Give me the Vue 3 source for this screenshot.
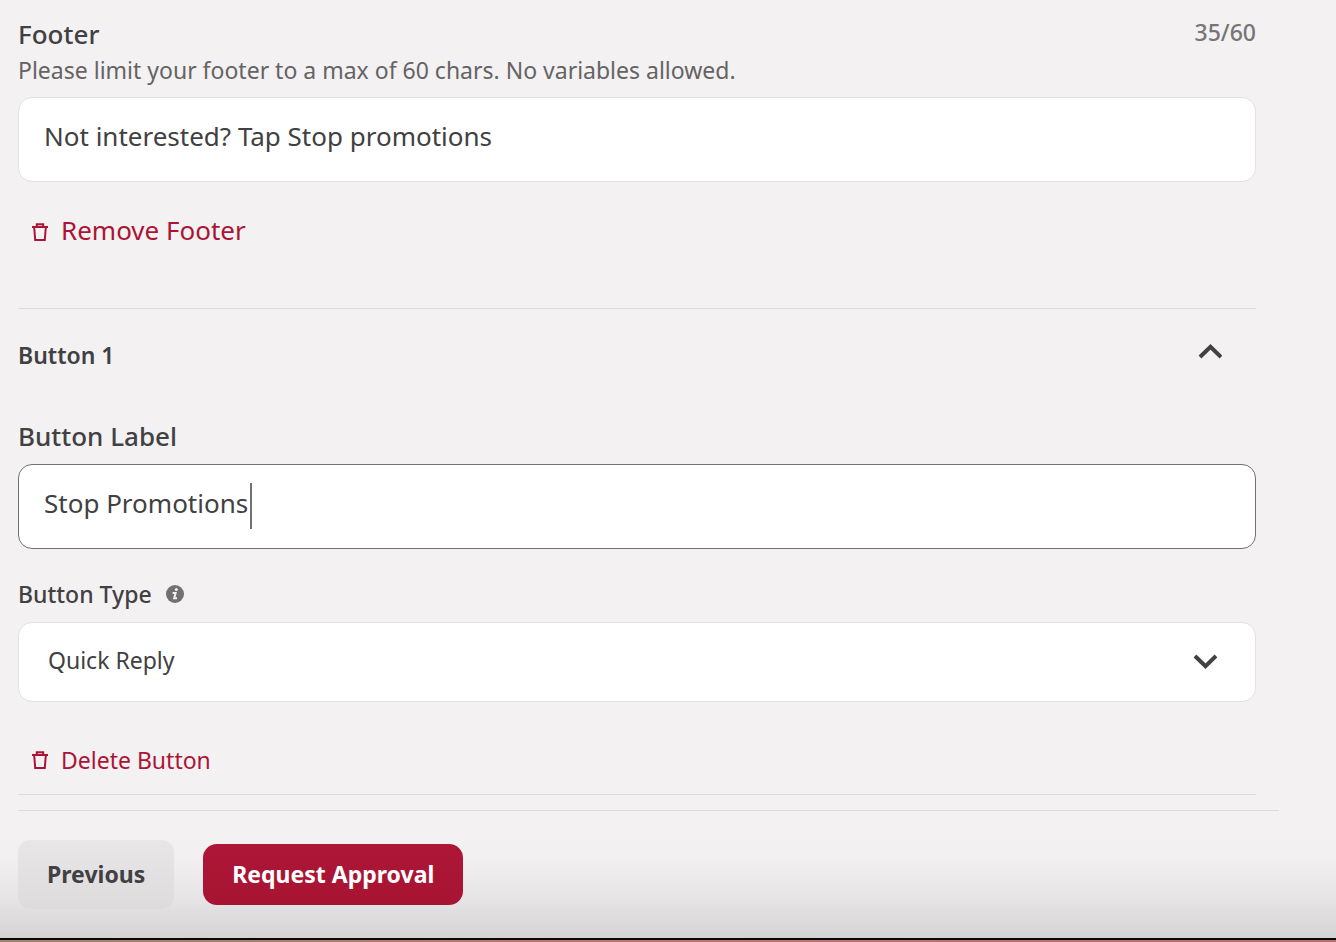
<script setup>
import { ref, computed } from 'vue'

const footer = ref('Not interested? Tap Stop promotions')
const label = ref('Stop Promotions')
const type = ref('Quick Reply')
const open = ref(true)
const limit = 60
const count = computed(() => `${footer.value.length}/${limit}`)
</script>

<template>
  <main class="page">
    <form class="form" @submit.prevent>
      <section class="footer-section">
        <div class="heading">
          <label class="title" for="footer">Footer</label>
          <span class="count">{{ count }}</span>
        </div>
        <p id="footer-help" class="help">Please limit your footer to a max of 60 chars. No variables allowed.</p>
        <input id="footer" v-model="footer" class="field" type="text" maxlength="60" aria-describedby="footer-help" />
        <button class="remove large" type="button">
          <svg class="trash" viewBox="0 0 16 18" aria-hidden="true">
            <path d="M0 4H16M4.8 3.5V1.2H11.2V3.5M2.2 4.5L3.2 17H12.8L13.8 4.5" />
          </svg>
          <span>Remove Footer</span>
        </button>
      </section>

      <section class="button-section">
        <div class="accordion">
          <h2>Button 1</h2>
          <button class="toggle" type="button" aria-label="Toggle Button 1" :aria-expanded="open" @click="open = !open">
            <svg class="chevron" viewBox="0 0 24 15" aria-hidden="true"><path d="M2 13L12.5 2.8L23 13" /></svg>
          </button>
        </div>
        <div v-show="open" class="panel">
          <label class="title" for="label">Button Label</label>
          <div class="control">
            <input id="label" v-model="label" class="field active" type="text" />
            <span class="caret" aria-hidden="true"></span>
          </div>
          <div class="type-row">
            <label for="type">Button Type</label>
            <svg class="info" viewBox="0 0 18 18" aria-hidden="true">
              <circle cx="9" cy="9" r="9" fill="#727071" />
              <circle cx="10.3" cy="4.6" r="1.5" fill="#f3f1f2" />
              <path d="M6.6 8H9.6L8.2 13.3H11" fill="none" stroke="#f3f1f2" stroke-width="2" />
            </svg>
          </div>
          <div class="control">
            <select id="type" v-model="type" class="select">
              <option>Quick Reply</option>
            </select>
            <svg class="chevron down" viewBox="0 0 24 15" aria-hidden="true"><path d="M2 2L12.5 12.2L23 2" /></svg>
          </div>
          <button class="remove" type="button">
            <svg class="trash" viewBox="0 0 16 18" aria-hidden="true">
              <path d="M0 4H16M4.8 3.5V1.2H11.2V3.5M2.2 4.5L3.2 17H12.8L13.8 4.5" />
            </svg>
            <span>Delete Button</span>
          </button>
        </div>
      </section>
    </form>

    <div class="actions">
      <button class="previous" type="button">Previous</button>
      <button class="request" type="button">Request Approval</button>
    </div>
    <div class="edge"></div>
  </main>
</template>

<style>
body {
  background: #f3f1f2;
}
</style>

<style scoped>
* {
  box-sizing: border-box;
}
.page {
  display: flex;
  flex-direction: column;
  min-height: 100vh;
  color: #414042;
  font-family: "Noto Sans", "Open Sans", sans-serif;
  font-size: 23px;
  line-height: 36px;
  background: linear-gradient(to top, #d5d3d4 4px, #e6e4e5 44px, #f1eff0 84px, #f3f1f2 104px);
}
button,
input,
select {
  margin: 0;
  color: inherit;
  font: inherit;
}
button {
  padding: 0;
  border: 0;
  background: none;
  cursor: pointer;
}
.form {
  margin: 0 80px 0 18px;
}
.footer-section {
  padding: 16px 0 60px;
  border-bottom: 1px solid #dcdadb;
}
.heading {
  display: flex;
  justify-content: space-between;
}
.title {
  display: block;
  font-size: 26px;
  font-weight: 500;
}
.count {
  color: #777576;
  font-weight: 500;
  line-height: 32px;
}
.help {
  margin: 0 0 9px;
  color: #656364;
}
.field,
.select {
  display: block;
  width: 100%;
  border: 1px solid #e3e1e2;
  border-radius: 14px;
  outline: 0;
  background: #fff;
}
.field {
  height: 85px;
  padding: 0 25px 8px;
  font-size: 26px;
}
.active {
  border-color: #727071;
}
.remove {
  display: flex;
  align-items: center;
  gap: 13px;
  margin: 40px 0 0 14px;
  color: #ab1535;
}
.large {
  margin-top: 30px;
  font-size: 26px;
}
.large .trash {
  margin-top: 4px;
}
.trash {
  width: 16px;
  height: 18px;
  fill: none;
  stroke: currentColor;
  stroke-width: 2;
}
.button-section {
  padding: 28px 0 16px;
  border-bottom: 1px solid #dcdadb;
}
.accordion {
  display: flex;
  align-items: center;
  justify-content: space-between;
}
h2 {
  margin: 0;
  font-size: 23px;
  font-weight: 600;
}
.toggle {
  display: flex;
  margin-right: 34px;
  padding-bottom: 8px;
}
.chevron {
  width: 24px;
  height: 15px;
  fill: none;
  stroke: #414042;
  stroke-width: 4;
}
.panel {
  padding-top: 45px;
}
.control {
  position: relative;
}
.panel .title {
  margin-bottom: 10px;
}
.caret {
  position: absolute;
  top: 19px;
  left: 232px;
  width: 2px;
  height: 46px;
  background: #727071;
}
.type-row {
  display: flex;
  align-items: center;
  gap: 14px;
  margin: 27px 0 10px;
  font-weight: 500;
}
.info {
  width: 18px;
  height: 18px;
}
.select {
  height: 80px;
  padding: 0 80px 4px 29px;
  appearance: none;
}
.down {
  position: absolute;
  top: 32px;
  right: 39px;
  pointer-events: none;
}
.actions {
  display: flex;
  align-items: center;
  gap: 29px;
  margin: 15px 57px 0 18px;
  padding: 29px 0 28px;
  border-top: 1px solid #dcdadb;
  font-weight: 700;
}
.previous {
  height: 69px;
  padding: 0 29px 2px;
  border-radius: 12px;
  background: linear-gradient(#e8e6e7, #dddbdc);
}
.request {
  height: 61px;
  padding: 0 29px 2px;
  border-radius: 14px;
  color: #fff;
  background: linear-gradient(#ae1637, #a71432);
}
.edge {
  height: 4px;
  margin-top: auto;
  border-top: 2px solid #0c0708;
  background: linear-gradient(to right, #a58570, #b9776f 50%, #b4716f);
}
</style>
